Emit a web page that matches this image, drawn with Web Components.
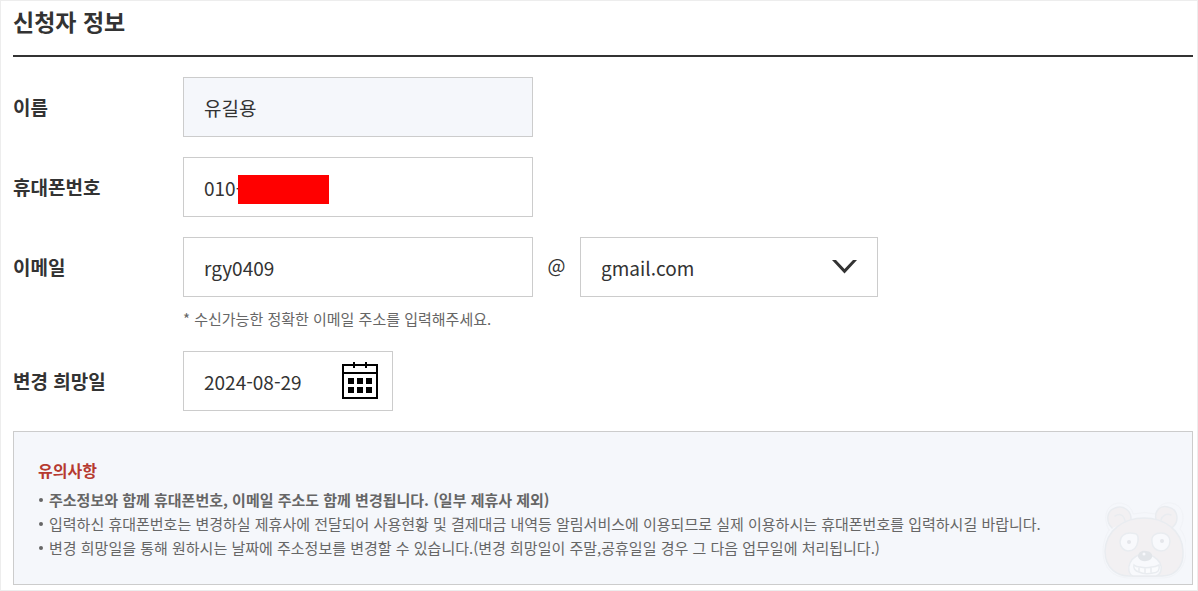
<!DOCTYPE html>
<html lang="ko">
<head>
<meta charset="utf-8">
<meta name="viewport" content="width=device-width, initial-scale=1">
<title>신청자 정보</title>
<style>
html{
    height: 100%;
}
body{
    box-sizing: border-box;
    min-height: 100%;
    margin: 0;
    padding: 0 4px 4px 12px;
    border: 1px solid #ededed;
    background: #fff;
    color: #333;
    font-family: "Noto Sans CJK KR", sans-serif;
    font-size: 19px;
    --panel: #f5f7fb;
}
</style>
</head>
<body>

<applicant-form heading="신청자 정보">
    <info-field label="이름" value="유길용" readonly></info-field>
    <info-field label="휴대폰번호" value="010-" masked></info-field>
    <info-field label="이메일" value="rgy0409">
        <domain-select></domain-select>
        <span slot="hint">* 수신가능한 정확한 이메일 주소를 입력해주세요.</span>
    </info-field>
    <info-field label="변경 희망일" value="2024-08-29" size="small">
        <calendar-button slot="icon"></calendar-button>
    </info-field>
    <notice-box heading="유의사항" slot="notice">
        <notice-item><b>주소정보와 함께 휴대폰번호, 이메일 주소도 함께 변경됩니다. (일부 제휴사 제외)</b></notice-item>
        <notice-item>입력하신 휴대폰번호는 변경하실 제휴사에 전달되어 사용현황 및 결제대금 내역등 알림서비스에 이용되므로 실제 이용하시는 휴대폰번호를 입력하시길 바랍니다.</notice-item>
        <notice-item>변경 희망일을 통해 원하시는 날짜에 주소정보를 변경할 수 있습니다.(변경 희망일이 주말,공휴일일 경우 그 다음 업무일에 처리됩니다.)</notice-item>
        <bear-mark slot="mark"></bear-mark>
    </notice-box>
</applicant-form>

<script>
function makeTemplate(html){
    const template = document.createElement('template');
    template.innerHTML = html;
    return template;
}

const formTemplate = makeTemplate(`
<style>
:host{
    display: block;
}
h2{
    margin: 0;
    padding: 2px 0 16px;
    border-bottom: 2px solid #333;
    font-size: 23px;
    font-weight: 700;
    line-height: 36px;
}
form{
    display: flex;
    flex-direction: column;
    gap: 20px;
    padding-top: 20px;
}
</style>
<h2></h2>
<form>
    <slot></slot>
    <slot name="notice"></slot>
</form>
`);

class ApplicantForm extends HTMLElement{
    constructor(){
        super();
        this.attachShadow({mode:'open'});
        this.shadowRoot.appendChild(formTemplate.content.cloneNode(true));
        this.shadowRoot.querySelector('h2').innerText = this.getAttribute('heading');
    }
}

const fieldTemplate = makeTemplate(`
<style>
:host{
    display: grid;
    grid-template-columns: 170px 1fr;
}
label{
    font-weight: 700;
    line-height: 60px;
}
.controls{
    display: flex;
    align-items: center;
}
.box{
    position: relative;
    box-sizing: border-box;
    display: flex;
    align-items: center;
    width: 350px;
    height: 60px;
    padding-right: 14px;
    border: 1px solid #ccc;
    background: #fff;
}
:host([size="small"]) .box{
    width: 210px;
}
:host([readonly]) .box{
    background: var(--panel);
}
input{
    flex: 1;
    min-width: 0;
    height: 100%;
    box-sizing: border-box;
    margin: 0;
    padding: 0 0 0 20px;
    border: 0;
    outline: 0;
    background: transparent;
    color: #333;
    font: inherit;
}
/* covers the rest of the phone number */
.mask{
    display: none;
    position: absolute;
    left: 54px;
    top: 17px;
    width: 91px;
    height: 29px;
    background: #f00;
}
:host([masked]) .mask{
    display: block;
}
.hint::slotted(*){
    grid-column: 2;
    margin-top: 10px;
    color: #666;
    font-size: 15px;
    line-height: 24px;
}
</style>
<label for="field"></label>
<div class="controls">
    <div class="box">
        <input id="field" type="text">
        <span class="mask"></span>
        <slot name="icon"></slot>
    </div>
    <slot></slot>
</div>
<slot name="hint" class="hint"></slot>
`);

class InfoField extends HTMLElement{
    constructor(){
        super();
        this.attachShadow({mode:'open'});
        this.shadowRoot.appendChild(fieldTemplate.content.cloneNode(true));
        this.shadowRoot.querySelector('label').innerText = this.getAttribute('label');
        const input = this.shadowRoot.querySelector('input');
        input.value = this.getAttribute('value');
        input.readOnly = this.hasAttribute('readonly');
    }
}

const domainTemplate = makeTemplate(`
<style>
:host{
    display: flex;
    align-items: center;
}
.at{
    width: 47px;
    padding-bottom: 6px;
    text-align: center;
}
.wrap{
    position: relative;
    width: 298px;
}
select{
    appearance: none;
    box-sizing: border-box;
    display: block;
    width: 100%;
    height: 60px;
    margin: 0;
    padding: 0 60px 0 20px;
    border: 1px solid #ccc;
    border-radius: 0;
    background: #fff;
    color: #333;
    font: inherit;
}
svg{
    position: absolute;
    right: 20px;
    top: 22px;
    pointer-events: none;
}
</style>
<span class="at">@</span>
<div class="wrap">
    <select aria-label="이메일 도메인">
        <option>gmail.com</option>
    </select>
    <svg width="26" height="16" viewBox="0 0 26 16"><path d="M0 1H4L12.500 10 21 1H25L12.500 14.500Z" fill="#333"/></svg>
</div>
`);

class DomainSelect extends HTMLElement{
    constructor(){
        super();
        this.attachShadow({mode:'open'});
        this.shadowRoot.appendChild(domainTemplate.content.cloneNode(true));
    }
}

const calendarTemplate = makeTemplate(`
<style>
:host{
    display: block;
}
button{
    display: block;
    margin: 0;
    padding: 0;
    border: 0;
    background: none;
    cursor: pointer;
}
svg{
    display: block;
}
</style>
<button type="button" aria-label="날짜 선택">
    <svg width="36" height="38" viewBox="0 0 36 38" shape-rendering="crispEdges">
        <path d="M1 3H35V36H1ZM0 11H36M12 0V6M24 0V6" fill="none" stroke="#000" stroke-width="2"/>
        <path d="M6 16h6v6H6zM15 16h6v6h-6zM24 16h6v6h-6zM6 25h6v6H6zM15 25h6v6h-6zM24 25h6v6h-6z"/>
    </svg>
</button>
`);

class CalendarButton extends HTMLElement{
    constructor(){
        super();
        this.attachShadow({mode:'open'});
        this.shadowRoot.appendChild(calendarTemplate.content.cloneNode(true));
    }
}

const noticeTemplate = makeTemplate(`
<style>
:host{
    position: relative;
    display: block;
    padding: 24px;
    border: 1px solid #ccc;
    background: var(--panel);
    color: #666;
    font-size: 15px;
    line-height: 24px;
}
h3{
    margin: 0 0 4px;
    color: #b63a30;
    font-size: 16px;
    font-weight: 700;
    line-height: 28px;
}
.mark::slotted(*){
    position: absolute;
    right: 6px;
    bottom: 5px;
}
</style>
<h3></h3>
<div role="list"><slot></slot></div>
<slot name="mark" class="mark"></slot>
`);

class NoticeBox extends HTMLElement{
    constructor(){
        super();
        this.attachShadow({mode:'open'});
        this.shadowRoot.appendChild(noticeTemplate.content.cloneNode(true));
        this.shadowRoot.querySelector('h3').innerText = this.getAttribute('heading');
    }
}

const itemTemplate = makeTemplate(`
<style>
:host{
    display: flex;
    gap: 6px;
    padding-left: 1px;
}
:host::before{
    content: "";
    flex: none;
    width: 4px;
    height: 4px;
    margin-top: 10px;
    border-radius: 50%;
    background: #666;
}
::slotted(b){
    font-weight: 700;
}
</style>
<span><slot></slot></span>
`);

class NoticeItem extends HTMLElement{
    constructor(){
        super();
        this.attachShadow({mode:'open'});
        this.shadowRoot.appendChild(itemTemplate.content.cloneNode(true));
    }
    connectedCallback(){
        this.setAttribute('role', 'listitem');
    }
}

const bearTemplate = makeTemplate(`
<style>
:host{
    display: block;
    pointer-events: none;
}
svg{
    display: block;
}
</style>
<svg width="84" height="78" viewBox="0 0 84 78" fill="#f2f0f2" stroke="#e9ecf0" stroke-width="1.5" stroke-linecap="round">
    <path d="M7 29C1 18 3 4 16 2c9 0 14 5 15 11q12-3 23 0C56 5 61 1 69 2c12 2 15 14 9 26 5 6 7 14 6 23-1 16-10 26-24 26H26C10 76 2 67 1 52c0-9 2-16 6-23Z" fill="none" stroke="#f1f3f7" stroke-width="1"/>
    <path d="M10 27C4 21 4 10 13 7c8-3 17 2 16 13M54 19C52 9 59 4 66 6c10 2 12 14 4 21"/>
    <path d="M13 15c5-3 9-1 10 5M59 19c1-4 5-7 10-5" fill="none"/>
    <path d="M42 17C22 17 4 29 3 50c0 17 12 25 24 25h33c13 0 22-9 21-25C80 29 62 17 42 17Z"/>
    <path d="M31 75c-5-2-5-9-3-13 3-6 9-9 15-9s12 4 15 9c2 4 2 11-4 13Z" fill="#f8f9fc"/>
    <path d="M18 41c0-6 5-9 10-9 7 0 9 2 8 8-1 7-5 10-10 10-4 0-8-4-8-9Z" fill="#f8f9fc"/>
    <path d="M68 40c0-5-4-8-9-8-6 0-10 3-9 9 0 5 4 9 9 9s9-4 9-10Z" fill="#f8f9fc"/>
    <circle cx="27" cy="41" r="2" fill="#e4e6ea" stroke="none"/>
    <circle cx="60" cy="40" r="2" fill="#e4e6ea" stroke="none"/>
    <path d="M36 56c0-5 4-7 8-6 4 0 7 3 6 6-1 5-12 6-14 0Z" fill="#e2e5e9" stroke="none"/>
    <circle cx="42" cy="53" r="1.5" fill="#f7f8fc" stroke="none"/>
    <path d="M32 64c1 1 3 2 6 2 4 1 8 1 12 0 3 0 5-1 7-2 1 5-1 8-6 8-5 1-10 1-14-1-4-1-6-4-5-7ZM37 66v5M43 67v5M49 66v5" fill="#fafbfd"/>
</svg>
`);

class BearMark extends HTMLElement{
    constructor(){
        super();
        this.attachShadow({mode:'open'});
        this.shadowRoot.appendChild(bearTemplate.content.cloneNode(true));
    }
}

window.customElements.define('applicant-form', ApplicantForm);
window.customElements.define('info-field', InfoField);
window.customElements.define('domain-select', DomainSelect);
window.customElements.define('calendar-button', CalendarButton);
window.customElements.define('notice-box', NoticeBox);
window.customElements.define('notice-item', NoticeItem);
window.customElements.define('bear-mark', BearMark);
</script>
</body>
</html>
